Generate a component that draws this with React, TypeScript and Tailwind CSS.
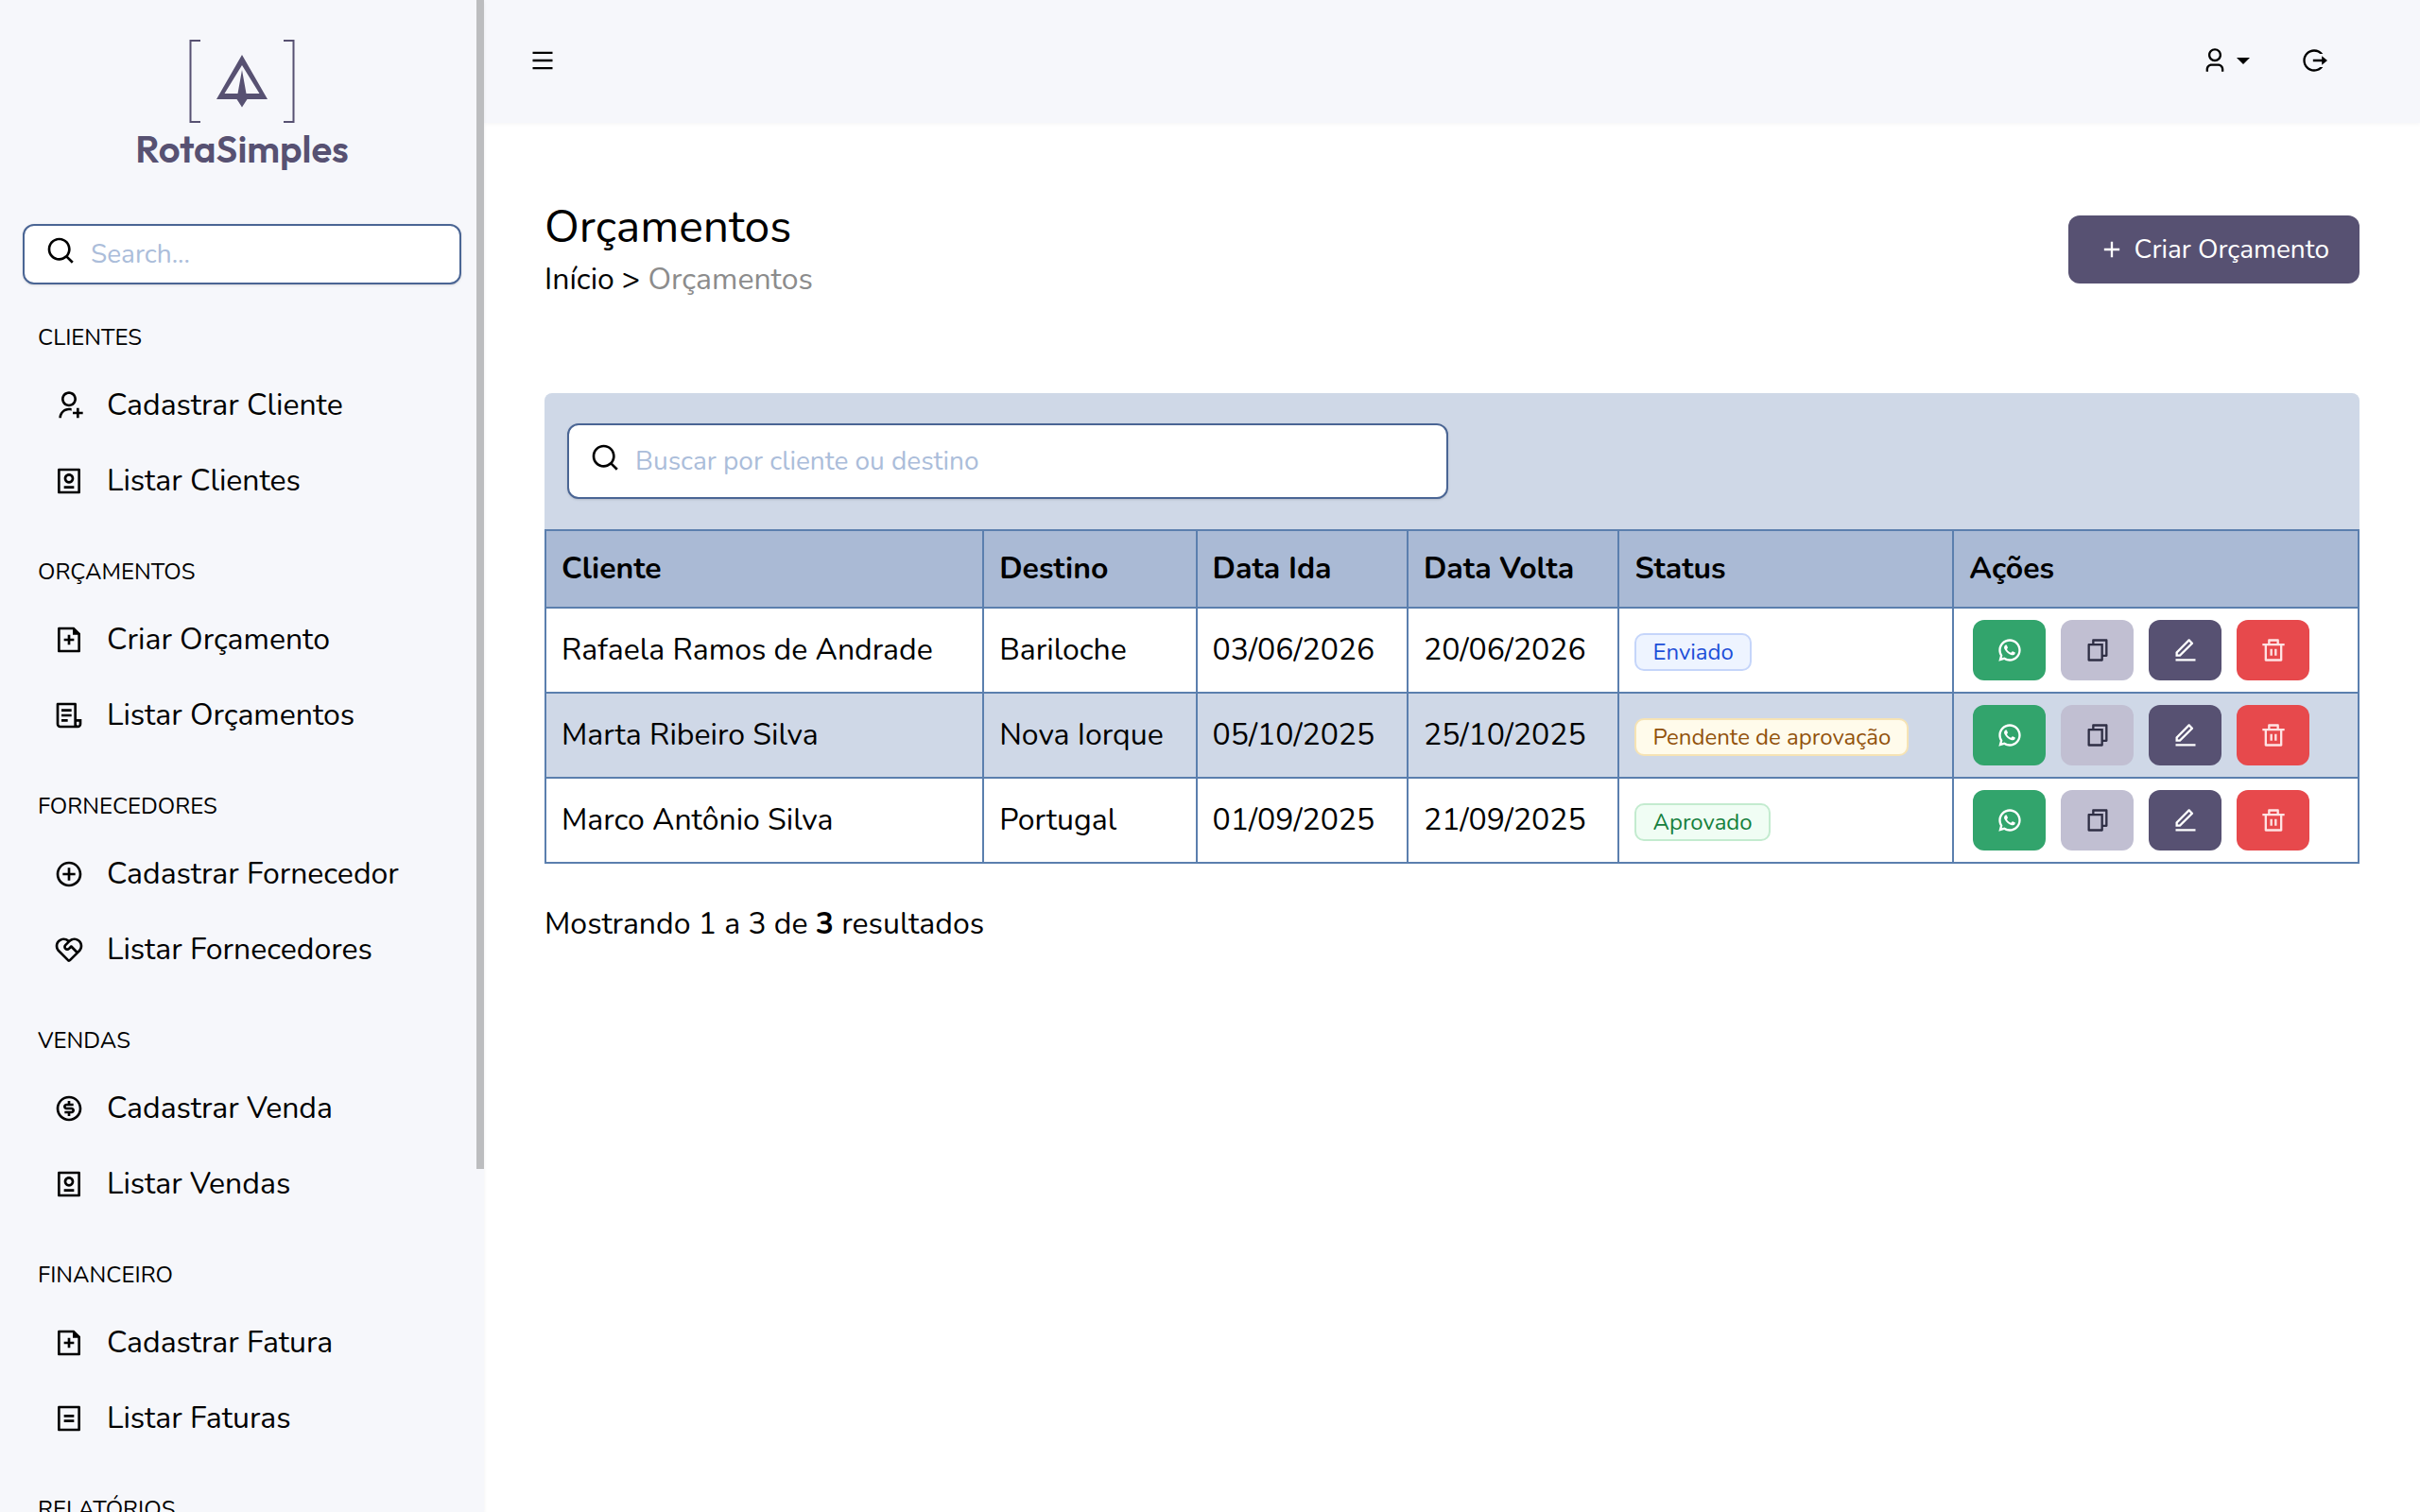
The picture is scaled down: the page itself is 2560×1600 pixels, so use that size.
import type { ComponentType } from "react";
import {
  RiAddCircleLine,
  RiAddLine,
  RiBillLine,
  RiDeleteBinLine,
  RiEditLine,
  RiFileAddLine,
  RiFileCopyLine,
  RiFileList3Line,
  RiLogoutCircleRLine,
  RiMenuLine,
  RiMoneyDollarCircleLine,
  RiPassportLine,
  RiSearchLine,
  RiServiceLine,
  RiUser3Line,
  RiUserAddLine,
  RiWhatsappLine,
} from "react-icons/ri";

type Icon = ComponentType<{ className?: string }>;

const sections: { title: string; items: { label: string; icon: Icon }[] }[] = [
  {
    title: "CLIENTES",
    items: [
      { label: "Cadastrar Cliente", icon: RiUserAddLine },
      { label: "Listar Clientes", icon: RiPassportLine },
    ],
  },
  {
    title: "ORÇAMENTOS",
    items: [
      { label: "Criar Orçamento", icon: RiFileAddLine },
      { label: "Listar Orçamentos", icon: RiFileList3Line },
    ],
  },
  {
    title: "FORNECEDORES",
    items: [
      { label: "Cadastrar Fornecedor", icon: RiAddCircleLine },
      { label: "Listar Fornecedores", icon: RiServiceLine },
    ],
  },
  {
    title: "VENDAS",
    items: [
      { label: "Cadastrar Venda", icon: RiMoneyDollarCircleLine },
      { label: "Listar Vendas", icon: RiPassportLine },
    ],
  },
  {
    title: "FINANCEIRO",
    items: [
      { label: "Cadastrar Fatura", icon: RiFileAddLine },
      { label: "Listar Faturas", icon: RiBillLine },
    ],
  },
  { title: "RELATÓRIOS", items: [] },
];

const badgeStyles = {
  Enviado: "border-[#c5d5fa] bg-[#eef4ff] text-[#1d4ed8]",
  "Pendente de aprovação": "border-[#f6e3b4] bg-[#fffbeb] text-[#92520c]",
  Aprovado: "border-[#c3ebcf] bg-[#f0fdf4] text-[#15803d]",
};

const rows: {
  client: string;
  destination: string;
  departure: string;
  back: string;
  status: keyof typeof badgeStyles;
}[] = [
  {
    client: "Rafaela Ramos de Andrade",
    destination: "Bariloche",
    departure: "03/06/2026",
    back: "20/06/2026",
    status: "Enviado",
  },
  {
    client: "Marta Ribeiro Silva",
    destination: "Nova Iorque",
    departure: "05/10/2025",
    back: "25/10/2025",
    status: "Pendente de aprovação",
  },
  {
    client: "Marco Antônio Silva",
    destination: "Portugal",
    departure: "01/09/2025",
    back: "21/09/2025",
    status: "Aprovado",
  },
];

const columns = [
  { title: "Cliente", width: "w-[24.15%]" },
  { title: "Destino", width: "w-[11.75%]" },
  { title: "Data Ida", width: "w-[11.65%]" },
  { title: "Data Volta", width: "w-[11.65%]" },
  { title: "Status", width: "w-[18.45%]" },
  { title: "Ações", width: "w-auto" },
];

const actions: { label: string; icon: Icon; style: string }[] = [
  { label: "Enviar por WhatsApp", icon: RiWhatsappLine, style: "bg-[#32a46c] text-white" },
  { label: "Duplicar", icon: RiFileCopyLine, style: "bg-[#c1bfd2] text-[#2f2f45]" },
  { label: "Editar", icon: RiEditLine, style: "bg-[#575172] text-white" },
  { label: "Excluir", icon: RiDeleteBinLine, style: "bg-[#e7494c] text-[#ffe3e3]" },
];

function Logo() {
  return (
    <a href="#" className="flex flex-col items-center pt-[42px] text-[#575172]">
      <svg viewBox="0 0 112 88" className="h-[88px] w-[112px]" fill="none" aria-hidden="true">
        <path d="M12 1H1.5V87H12M100 1H110.5V87H100" stroke="currentColor" strokeWidth="2" />
        <path
          fill="currentColor"
          fillRule="evenodd"
          d="M56 16L83 63H61.5L56 71.5L50.5 63H29ZM56 27L37.5 57H51.5L56 32L60.5 57H74.5Z"
        />
      </svg>
      <span className="font-['Outfit','Nunito',sans-serif] text-[40px] leading-[54px] font-semibold">
        RotaSimples
      </span>
    </a>
  );
}

function SearchBox({ label, placeholder, size }: { label: string; placeholder: string; size: string }) {
  return (
    <div className="relative w-full">
      <RiSearchLine className="pointer-events-none absolute top-1/2 left-6 size-8 -translate-y-5 text-black" />
      <input
        type="search"
        aria-label={label}
        placeholder={placeholder}
        className={`${size} w-full rounded-xl border-2 border-[#4a6594] bg-white pr-6 pl-[70px] text-[28px] shadow-sm outline-none placeholder:text-[#abbdda]`}
      />
    </div>
  );
}

function Sidebar() {
  return (
    <aside className="relative z-10 h-screen w-[512px] shrink-0 overflow-hidden bg-[#f6f7fb] shadow-[0_2px_4px_rgba(0,0,0,0.06)]">
      <Logo />
      <div className="px-6 pt-[53px]">
        <SearchBox label="Buscar no menu" placeholder="Search..." size="h-16" />
      </div>
      <nav>
        {sections.map((section) => (
          <section key={section.title}>
            <h2 className="px-10 pt-[38px] pb-[14px] text-2xl leading-9">{section.title}</h2>
            <ul>
              {section.items.map(({ label, icon: ItemIcon }) => (
                <li key={label}>
                  <a href="#" className="flex h-20 items-center gap-6 px-[57px]">
                    <ItemIcon className="size-8 shrink-0" />
                    {label}
                  </a>
                </li>
              ))}
            </ul>
          </section>
        ))}
      </nav>
      <div className="absolute top-0 right-0 h-[1237px] w-2 bg-[#bcbdbf]" />
    </aside>
  );
}

function TopBar() {
  return (
    <header className="flex h-[130px] items-center justify-between bg-[#f6f7fb] pr-[98px] pb-0.5 pl-12 shadow-[0_2px_4px_rgba(0,0,0,0.03)]">
      <button type="button" aria-label="Menu">
        <RiMenuLine className="size-7" />
      </button>
      <div className="flex items-center gap-[54px]">
        <button type="button" aria-label="Conta" className="flex items-center gap-[9px]">
          <RiUser3Line className="size-7" />
          <span className="border-x-[7px] border-t-[7px] border-x-transparent border-t-black" />
        </button>
        <button type="button" aria-label="Sair">
          <RiLogoutCircleRLine className="size-7" />
        </button>
      </div>
    </header>
  );
}

function QuotesTable() {
  return (
    <div>
      <div className="rounded-t-lg bg-[#cfd8e7] px-6 py-8">
        <div className="w-1/2 max-w-[932px]">
          <SearchBox
            label="Buscar orçamentos"
            placeholder="Buscar por cliente ou destino"
            size="h-20"
          />
        </div>
      </div>
      <table className="w-full table-fixed border-collapse text-left">
        <thead>
          <tr className="h-[82px] bg-[#aabad5]">
            {columns.map((column) => (
              <th
                key={column.title}
                scope="col"
                className={`${column.width} border-2 border-[#5b7fae] px-4 font-bold`}
              >
                {column.title}
              </th>
            ))}
          </tr>
        </thead>
        <tbody>
          {rows.map((row) => (
            <tr key={row.client} className="h-[90px] even:bg-[#cfd8e7]">
              <td className="border-2 border-[#5b7fae] px-4">{row.client}</td>
              <td className="border-2 border-[#5b7fae] px-4">{row.destination}</td>
              <td className="border-2 border-[#5b7fae] px-4">{row.departure}</td>
              <td className="border-2 border-[#5b7fae] px-4">{row.back}</td>
              <td className="border-2 border-[#5b7fae] px-4">
                <span
                  className={`${badgeStyles[row.status]} inline-block rounded-[10px] border-2 px-[17px] align-middle text-2xl leading-9`}
                >
                  {row.status}
                </span>
              </td>
              <td className="border-2 border-[#5b7fae] px-5">
                <div className="flex gap-4">
                  {actions.map(({ label, icon: ActionIcon, style }) => (
                    <button
                      key={label}
                      type="button"
                      aria-label={label}
                      className={`${style} flex h-16 w-[77px] items-center justify-center rounded-xl`}
                    >
                      <ActionIcon className="size-7" />
                    </button>
                  ))}
                </div>
              </td>
            </tr>
          ))}
        </tbody>
      </table>
      <p className="pt-10">
        Mostrando 1 a 3 de <b>3</b> resultados
      </p>
    </div>
  );
}

export default function App() {
  return (
    <div className="flex h-screen overflow-hidden bg-white font-['Nunito',sans-serif] text-[32px] leading-[48px] text-black">
      <Sidebar />
      <div className="min-w-0 flex-1">
        <TopBar />
        <main className="px-16 pt-[78px]">
          <div className="flex items-start justify-between pb-24">
            <div>
              <h1 className="text-5xl leading-[64px]">Orçamentos</h1>
              <nav aria-label="Trilha">
                <a href="#">Início</a> &gt; <span className="text-[#8c8c8c]">Orçamentos</span>
              </nav>
            </div>
            <button
              type="button"
              className="mt-5 flex h-[72px] items-center gap-[10px] rounded-xl bg-[#575172] px-8 text-[28px] text-white"
            >
              <RiAddLine className="size-7" />
              Criar Orçamento
            </button>
          </div>
          <QuotesTable />
        </main>
      </div>
    </div>
  );
}
